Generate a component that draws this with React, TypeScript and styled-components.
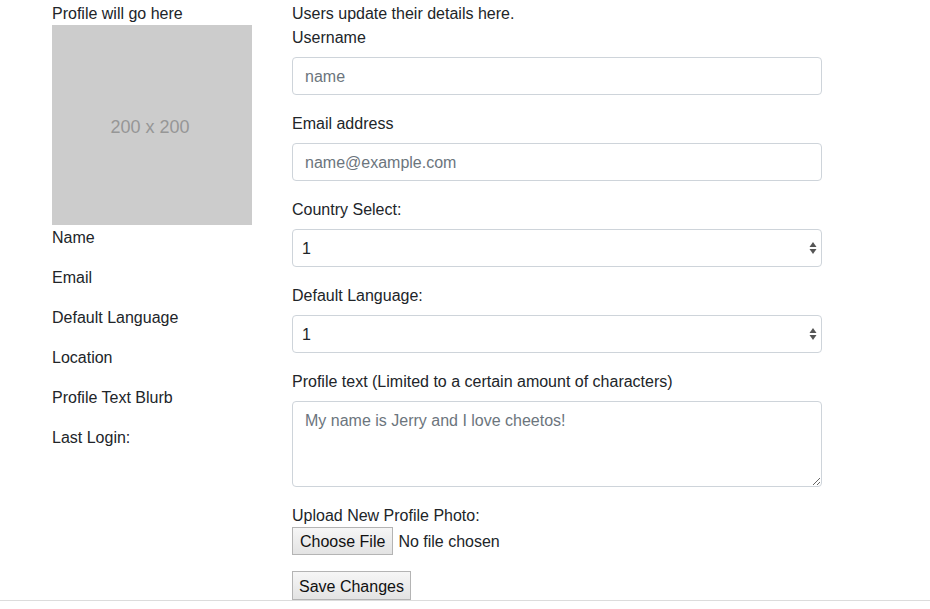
import React from "react";
import styled, { createGlobalStyle } from "styled-components";

const GlobalStyle = createGlobalStyle`
  html, body { margin: 0; padding: 0; background: #fff; }
  body {
    font-family: "Liberation Sans", Arial, sans-serif;
    font-size: 16px;
    line-height: 24px;
    color: #212529;
  }
  * { box-sizing: border-box; }
`;

const Page = styled.div`
  display: grid;
  grid-template-columns: 200px 530px;
  column-gap: 40px;
  padding-left: 52px;
  border-bottom: 1px solid #dcdcdc;
`;

const Sidebar = styled.aside`
  display: flex;
  flex-direction: column;
`;

const Caption = styled.div`
  height: 25px;
  padding-top: 2px;
  line-height: 24px;
`;

const Placeholder = styled.div`
  width: 200px;
  height: 200px;
  background: #cccccc;
  color: #969696;
  font-size: 18px;
  display: flex;
  align-items: center;
  justify-content: center;
  padding-top: 4px;
  padding-right: 4px;
`;

const InfoLine = styled.p`
  margin: 0 0 15px 0;
  padding-top: 1px;
  line-height: 24px;
`;

const Main = styled.main`
  display: flex;
  flex-direction: column;
  padding-top: 1px;
`;

const Intro = styled.div`
  height: 24px;
  padding-top: 1px;
  line-height: 24px;
`;

const Group = styled.div<{ $gap?: number }>`
  display: flex;
  flex-direction: column;
  margin-bottom: ${(p) => (p.$gap ?? 16)}px;
`;

const Label = styled.label<{ $mb?: number }>`
  display: block;
  height: 24px;
  padding-top: 1px;
  line-height: 24px;
  margin-bottom: ${(p) => (p.$mb ?? 8)}px;
`;

const fieldBase = `
  width: 100%;
  height: 38px;
  padding: 7px 12px 5px;
  font-family: "Liberation Sans", Arial, sans-serif;
  font-size: 16px;
  line-height: 24px;
  color: #495057;
  background: #fff;
  border: 1px solid #ced4da;
  border-radius: 4px;
  outline: none;
`;

const Input = styled.input`
  ${fieldBase}
  &::placeholder { color: #6c757d; opacity: 1; }
`;

const SelectWrap = styled.div`
  position: relative;
`;

const Select = styled.select`
  ${fieldBase}
  appearance: none;
  -webkit-appearance: none;
  color: #212529;
  padding-left: 9px;
`;

const Arrows = styled.svg`
  position: absolute;
  right: 4px;
  top: 12px;
  pointer-events: none;
`;

const TextArea = styled.textarea`
  ${fieldBase}
  height: 86px;
  resize: vertical;
  &::placeholder { color: #6c757d; opacity: 1; }
`;

const FileInput = styled.input`
  font-family: "Liberation Sans", Arial, sans-serif;
  font-size: 16px;
  color: #212529;
  height: 28px;
  &::file-selector-button {
    font-family: "Liberation Sans", Arial, sans-serif;
    font-size: 16px;
    height: 28px;
    padding: 2px 7px 0;
    margin-right: 5px;
    color: #111;
    background: linear-gradient(#f6f6f6, #e3e3e3);
    border: 1px solid #b4b4b4;
    border-radius: 0;
  }
`;

const Button = styled.button`
  align-self: flex-start;
  font-family: "Liberation Sans", Arial, sans-serif;
  font-size: 16px;
  height: 29px;
  padding: 2px 6px 0;
  color: #111;
  background: linear-gradient(#f6f6f6, #e3e3e3);
  border: 1px solid #b4b4b4;
  border-radius: 0;
`;

const SelectArrows = () => (
  <Arrows width="10" height="14" viewBox="0 0 10 14">
    <path d="M5 1 L8.5 6 L1.5 6 Z" fill="#555" />
    <path d="M5 13 L8.5 8 L1.5 8 Z" fill="#555" />
  </Arrows>
);

export default function App() {
  return (
    <>
      <GlobalStyle />
      <Page>
        <Sidebar>
          <Caption>Profile will go here</Caption>
          <Placeholder>200 x 200</Placeholder>
          <InfoLine>Name</InfoLine>
          <InfoLine>Email</InfoLine>
          <InfoLine>Default Language</InfoLine>
          <InfoLine>Location</InfoLine>
          <InfoLine>Profile Text Blurb</InfoLine>
          <InfoLine>Last Login:</InfoLine>
        </Sidebar>
        <Main>
          <Intro>Users update their details here.</Intro>
          <Group>
            <Label>Username</Label>
            <Input placeholder="name" />
          </Group>
          <Group>
            <Label>Email address</Label>
            <Input placeholder="name@example.com" />
          </Group>
          <Group>
            <Label>Country Select:</Label>
            <SelectWrap>
              <Select defaultValue="1">
                <option>1</option>
                <option>2</option>
                <option>3</option>
              </Select>
              <SelectArrows />
            </SelectWrap>
          </Group>
          <Group>
            <Label>Default Language:</Label>
            <SelectWrap>
              <Select defaultValue="1">
                <option>1</option>
                <option>2</option>
                <option>3</option>
              </Select>
              <SelectArrows />
            </SelectWrap>
          </Group>
          <Group>
            <Label>Profile text (Limited to a certain amount of characters)</Label>
            <TextArea placeholder="My name is Jerry and I love cheetos!" />
          </Group>
          <Group $gap={16}>
            <Label $mb={0}>Upload New Profile Photo:</Label>
            <FileInput type="file" />
          </Group>
          <Button>Save Changes</Button>
        </Main>
      </Page>
    </>
  );
}
